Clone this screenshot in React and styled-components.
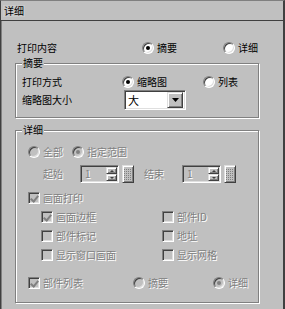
import styled, { createGlobalStyle, css } from "styled-components";

const GlobalStyle = createGlobalStyle`
  html, body { margin: 0; padding: 0; background: #c0c0c0; }
  body { font-family: "Noto Sans CJK SC", "Noto Sans", sans-serif; font-size: 10px; }
`;

export default function App() {
  return (
    <>
      <GlobalStyle />
      <Window>
        <TitleBar><span>详细</span></TitleBar>
        <Body>
          <Row $top={19} $indent={2} $h={16}>
            <Label $w={125}>打印内容</Label>
            <Option $w={81}><Radio $checked />摘要</Option>
            <Option><Radio />详细</Option>
          </Row>

          <Group $top={7} $pad="10px 0 7px 6px">
            <Legend>摘要</Legend>
            <Row $h={16}>
              <Label $w={100}>打印方式</Label>
              <Option $w={81}><Radio $checked />缩略图</Option>
              <Option><Radio />列表</Option>
            </Row>
            <Row $h={20}>
              <Label $w={101}>缩略图大小</Label>
              <Combo>
                <ComboText>大</ComboText>
                <DropBtn>
                  <svg width="7" height="4" viewBox="0 0 7 4"><path d="M0 0h7L3.5 4z" fill="#000" /></svg>
                </DropBtn>
              </Combo>
            </Row>
          </Group>

          <Group $top={12} $pad="13px 0 11px 12px">
            <Legend>详细</Legend>
            <Row $h={16}>
              <Option $w={44} $off><Radio $off />全部</Option>
              <Option $off><Radio $checked $off />指定范围</Option>
            </Row>
            <Row $h={18} $top={5} $indent={15}>
              <Label $w={37} $off>起始</Label>
              <Spin>
                <SpinText>1</SpinText>
                <SpinBtns><SpinBtn><Arrow $up /></SpinBtn><SpinBtn><Arrow /></SpinBtn></SpinBtns>
              </Spin>
              <GridBtn><GridIcon /></GridBtn>
              <Label $w={38} $gap={10} $off>结束</Label>
              <Spin>
                <SpinText>1</SpinText>
                <SpinBtns><SpinBtn><Arrow $up /></SpinBtn><SpinBtn><Arrow /></SpinBtn></SpinBtns>
              </Spin>
              <GridBtn><GridIcon /></GridBtn>
            </Row>
            <Row $h={16} $top={7}>
              <Option $off><Check $checked />画面打印</Option>
            </Row>
            <Row $h={16} $top={3} $indent={13}>
              <Option $w={121} $off><Check $checked />画面边框</Option>
              <Option $off><Check />部件ID</Option>
            </Row>
            <Row $h={16} $top={3} $indent={13}>
              <Option $w={121} $off><Check />部件标记</Option>
              <Option $off><Check />地址</Option>
            </Row>
            <Row $h={16} $top={3} $indent={13}>
              <Option $w={121} $off><Check />显示窗口画面</Option>
              <Option $off><Check />显示网格</Option>
            </Row>
            <Row $h={16} $top={12}>
              <Option $w={105} $off><Check $checked />部件列表</Option>
              <Option $w={80} $off><Radio $off />摘要</Option>
              <Option $off><Radio $checked $off />详细</Option>
            </Row>
          </Group>
        </Body>
      </Window>
    </>
  );
}

function GridIcon() {
  const dots = [];
  for (let y = 0; y < 6; y++)
    for (let x = 0; x < 5; x++)
      dots.push(<rect key={`${x}-${y}`} x={x * 2} y={y * 2} width="1" height="1" fill="#808080" />);
  return <svg width="9" height="11" viewBox="0 0 9 11">{dots}</svg>;
}

const disabledText = css`
  color: #808080;
  text-shadow: 1px 1px 0 #ffffff;
`;

const Window = styled.div`
  width: 285px;
  height: 309px;
  box-sizing: border-box;
  background: #c0c0c0;
  border-top: 1px solid #808080;
  border-left: 1px solid #404040;
  border-right: 2px solid #404040;
  display: flex;
  flex-direction: column;
  color: #000;
  overflow: hidden;
`;

const TitleBar = styled.div`
  height: 19px;
  border-bottom: 1px solid #404040;
  display: flex;
  align-items: center;
  padding-left: 2px;
  line-height: 12px;
  span { background: #c8c8c8; padding: 0 1px; }
`;

const Body = styled.div`
  flex: 1;
  border-left: 1px solid #808080;
  padding-left: 13px;
  display: flex;
  flex-direction: column;
`;

const Row = styled.div`
  display: flex;
  align-items: center;
  height: ${(p) => p.$h || 16}px;
  margin-top: ${(p) => p.$top || 0}px;
  padding-left: ${(p) => p.$indent || 0}px;
  line-height: 12px;
  white-space: nowrap;
`;

const Label = styled.span`
  width: ${(p) => p.$w}px;
  margin-left: ${(p) => p.$gap || 0}px;
  flex: none;
  ${(p) => p.$off && disabledText}
`;

const Option = styled.label`
  display: flex;
  align-items: center;
  gap: 3px;
  width: ${(p) => (p.$w ? `${p.$w}px` : "auto")};
  flex: none;
  ${(p) => p.$off && disabledText}
`;

const Group = styled.div`
  position: relative;
  width: 244px;
  box-sizing: border-box;
  margin-top: ${(p) => p.$top}px;
  padding: ${(p) => p.$pad};
  border: 1px solid #808080;
  box-shadow: inset 1px 1px 0 #ffffff, 1px 1px 0 #ffffff;
  display: flex;
  flex-direction: column;
`;

const Legend = styled.span`
  position: absolute;
  top: -7px;
  left: 6px;
  padding: 0 1px;
  background: #c0c0c0;
  line-height: 12px;
  ${(p) => p.$off && disabledText}
`;

const Radio = styled.span`
  position: relative;
  width: 12px;
  height: 12px;
  box-sizing: border-box;
  flex: none;
  border-radius: 50%;
  border: 1px solid;
  border-color: #808080 #ffffff #ffffff #808080;
  background: ${(p) => (p.$off ? "#c0c0c0" : "#ffffff")};
  box-shadow: inset 1px 1px 0 #404040, inset -1px -1px 0 #dfdfdf;
  text-shadow: none;
  &::after {
    content: "";
    display: ${(p) => (p.$checked ? "block" : "none")};
    position: absolute;
    left: 3px;
    top: 3px;
    width: 4px;
    height: 4px;
    border-radius: 50%;
    background: ${(p) => (p.$off ? "#808080" : "#000000")};
  }
`;

const Check = styled.span`
  position: relative;
  width: 12px;
  height: 12px;
  box-sizing: border-box;
  flex: none;
  border: 1px solid;
  border-color: #808080 #ffffff #ffffff #808080;
  background: #c0c0c0;
  box-shadow: inset 1px 1px 0 #404040, inset -1px -1px 0 #dfdfdf;
  &::after {
    content: "";
    display: ${(p) => (p.$checked ? "block" : "none")};
    position: absolute;
    left: 3px;
    top: 1px;
    width: 3px;
    height: 6px;
    border: solid #808080;
    border-width: 0 2px 2px 0;
    transform: rotate(40deg);
  }
`;

const sunken = css`
  box-sizing: border-box;
  border: 1px solid;
  border-color: #808080 #ffffff #ffffff #808080;
  box-shadow: inset 1px 1px 0 #404040, inset -1px -1px 0 #dfdfdf;
`;

const raised = css`
  box-sizing: border-box;
  border: 1px solid;
  border-color: #dfdfdf #404040 #404040 #dfdfdf;
  box-shadow: inset 1px 1px 0 #ffffff, inset -1px -1px 0 #808080;
  background: #c0c0c0;
`;

const Combo = styled.div`
  ${sunken}
  width: 62px;
  height: 20px;
  margin-left: 1px;
  background: #ffffff;
  display: flex;
  align-items: center;
  padding: 2px;
`;

const ComboText = styled.span`
  flex: 1;
  padding-left: 1px;
  font-size: 11px;
`;

const DropBtn = styled.span`
  ${raised}
  width: 16px;
  height: 16px;
  display: flex;
  align-items: center;
  justify-content: center;
`;

const Spin = styled.div`
  ${sunken}
  width: 39px;
  height: 18px;
  background: #c0c0c0;
  display: flex;
  align-items: center;
  padding: 2px 1px 2px 2px;
  flex: none;
`;

const SpinText = styled.span`
  flex: 1;
  padding-left: 2px;
  ${disabledText}
`;

const SpinBtns = styled.div`
  display: flex;
  flex-direction: column;
  width: 11px;
  height: 14px;
`;

const SpinBtn = styled.span`
  ${raised}
  flex: 1;
  display: flex;
  align-items: center;
  justify-content: center;
`;

const Arrow = styled.span`
  width: 0;
  height: 0;
  border-left: 2px solid transparent;
  border-right: 2px solid transparent;
  ${(p) => (p.$up ? "border-bottom: 2px solid #404040;" : "border-top: 2px solid #404040;")}
`;

const GridBtn = styled.span`
  ${raised}
  width: 12px;
  height: 18px;
  margin-left: 3px;
  display: flex;
  align-items: center;
  justify-content: center;
  flex: none;
`;
